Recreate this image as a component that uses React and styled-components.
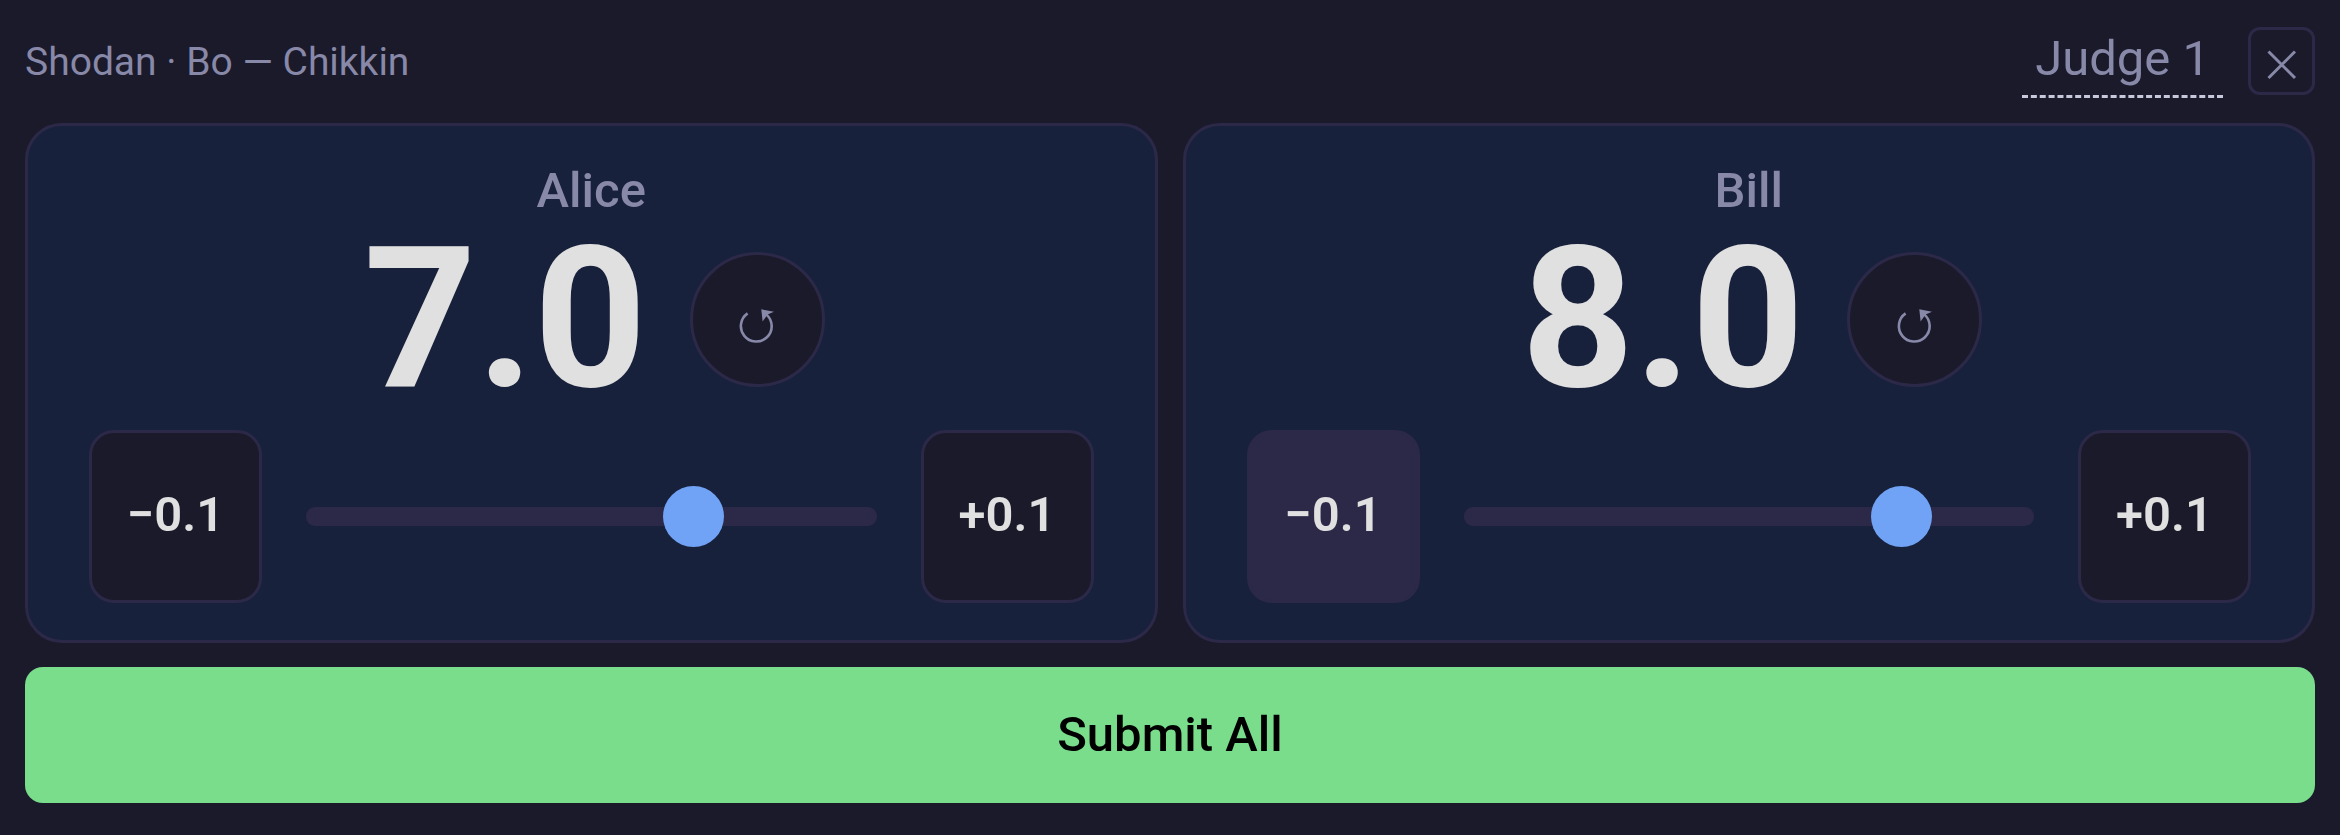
import React, { useState } from 'react';
import styled, { createGlobalStyle } from 'styled-components';

const GlobalStyle = createGlobalStyle`
  * {
    box-sizing: border-box;
  }

  body {
    margin: 0;
    background-color: #1a1a2b;
    color: #e0e0e0;
    font-family: Roboto, sans-serif;
  }

  button {
    font-family: inherit;
    margin: 0;
    cursor: pointer;
  }
`;

const Page = styled.div`
  min-height: 100vh;
  display: flex;
  flex-direction: column;
  gap: 24px;
  padding: 27px 25px 32px;
`;

const Header = styled.header`
  display: flex;
  justify-content: space-between;
  align-items: flex-start;
  height: 72px;
`;

const Title = styled.div`
  font-size: 39px;
  line-height: 70px;
  color: #8888a8;
`;

const HeaderRight = styled.div`
  display: flex;
  align-items: flex-start;
  gap: 25px;
`;

const JudgeName = styled.button`
  background: none;
  border: 0;
  border-bottom: 3px dashed #c8c8dc;
  padding: 4px 13px 8px;
  font-size: 49px;
  line-height: 56px;
  color: #8888a8;
`;

const CloseBtn = styled.button`
  width: 67px;
  height: 68px;
  padding: 0;
  display: flex;
  justify-content: center;
  align-items: center;
  background: none;
  border: 3px solid #2b2947;
  border-radius: 12px;
  color: #8888a8;
`;

const Cards = styled.main`
  flex-grow: 1;
  display: grid;
  grid-template-columns: 1fr 1fr;
  gap: 25px;
`;

const Card = styled.section`
  display: flex;
  flex-direction: column;
  align-items: center;
  padding: 36px 61px;
  background-color: #18213c;
  border: 3px solid #2b2947;
  border-radius: 37px;
`;

const Competitor = styled.h2`
  margin: 0;
  font-size: 49px;
  line-height: 58px;
  font-weight: 500;
  color: #8888a8;
`;

const ScoreRow = styled.div`
  display: flex;
  align-items: center;
  gap: 37px;
`;

const Score = styled.div`
  min-width: 295px;
  font-size: 197px;
  line-height: 198px;
  font-weight: 700;
  text-align: center;
`;

const ResetBtn = styled.button`
  width: 135px;
  height: 135px;
  padding: 0;
  display: flex;
  justify-content: center;
  align-items: center;
  background-color: #1a1a2b;
  border: 3px solid #2b2947;
  border-radius: 50%;
  color: #8888a8;
`;

const Controls = styled.div`
  width: 100%;
  display: flex;
  align-items: center;
  gap: 44px;
  margin-top: 12px;
`;

const StepBtn = styled.button`
  flex-shrink: 0;
  width: 173px;
  height: 173px;
  padding: 0 0 4px;
  font-size: 49px;
  font-weight: 600;
  color: #e0e0e0;
  background-color: ${props => (props.$pressed ? '#2b2947' : '#1a1a2b')};
  border: 3px solid #2b2947;
  border-radius: 25px;
`;

const Slider = styled.input`
  appearance: none;
  flex-grow: 1;
  min-width: 0;
  height: 19px;
  margin: 0;
  background-color: #2b2947;
  border-radius: 9px;
  outline: 0;

  &::-webkit-slider-thumb {
    appearance: none;
    width: 61px;
    height: 61px;
    border-radius: 50%;
    background-color: #70a3f5;
    cursor: pointer;
  }
`;

const SubmitBtn = styled.button`
  width: 100%;
  height: 136px;
  padding: 0 0 2px;
  border: 0;
  border-radius: 18px;
  background-color: #79dd8b;
  color: #000;
  font-size: 49px;
  font-weight: 500;
`;

const CloseIcon = () => (
  <svg width='60' height='60' viewBox='0 0 60 60' fill='none' stroke='currentColor' strokeWidth='3' aria-hidden='true'>
    <path d='M16.5 20.5L43 47M43 20.5L16.5 47' />
  </svg>
);

const ResetIcon = () => (
  <svg width='60' height='60' viewBox='0 0 60 60' aria-hidden='true'>
    <path d='M20.6 24.4A15.4 15.4 0 1 0 39.5 25.6' fill='none' stroke='currentColor' strokeWidth='2.6' />
    <path d='M34.3 20.3L47 22.8L40.6 25.4L35.6 32.6Z' fill='currentColor' />
  </svg>
);

const competitors = [
  { name: 'Alice', score: 7, pressed: false },
  { name: 'Bill', score: 8, pressed: true },
];

function ScoreCard({ name, initial, pressed }) {
  const [score, setScore] = useState(initial);

  const step = amount => {
    const next = Math.round((score + amount) * 10) / 10;
    setScore(Math.min(10, Math.max(0, next)));
  };

  return (
    <Card>
      <Competitor>{name}</Competitor>
      <ScoreRow>
        <Score>{score.toFixed(1)}</Score>
        <ResetBtn aria-label={`Reset ${name}`} onClick={() => setScore(initial)}>
          <ResetIcon />
        </ResetBtn>
      </ScoreRow>
      <Controls>
        <StepBtn $pressed={pressed} onClick={() => step(-0.1)}>−0.1</StepBtn>
        <Slider
          type='range'
          min='0'
          max='10'
          step='0.1'
          value={score}
          aria-label={`Score for ${name}`}
          onChange={e => setScore(Number(e.target.value))}
        />
        <StepBtn onClick={() => step(0.1)}>+0.1</StepBtn>
      </Controls>
    </Card>
  );
}

function App() {
  return (
    <>
      <GlobalStyle />
      <Page>
        <Header>
          <Title>Shodan · Bo — Chikkin</Title>
          <HeaderRight>
            <JudgeName>Judge 1</JudgeName>
            <CloseBtn aria-label='Close'>
              <CloseIcon />
            </CloseBtn>
          </HeaderRight>
        </Header>
        <Cards>
          {competitors.map(item => (
            <ScoreCard key={item.name} name={item.name} initial={item.score} pressed={item.pressed} />
          ))}
        </Cards>
        <SubmitBtn>Submit All</SubmitBtn>
      </Page>
    </>
  );
}

export default App;
